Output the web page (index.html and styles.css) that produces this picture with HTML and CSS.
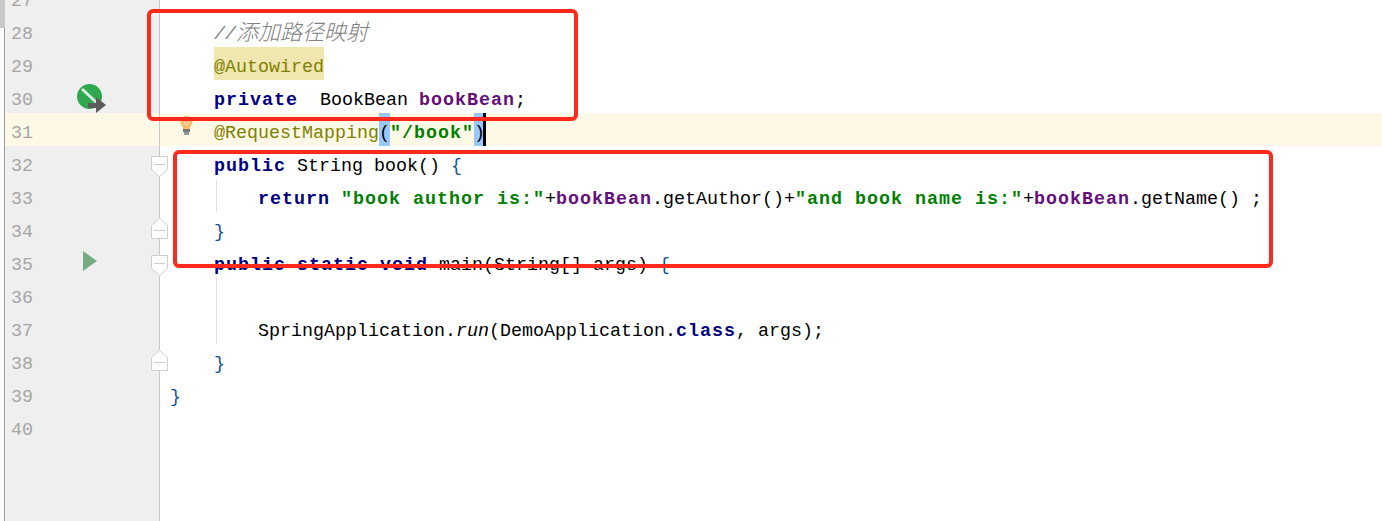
FILE: index.html
```html
<!DOCTYPE html>
<html lang="en">
<head>
<meta charset="utf-8">
<title>DemoApplication.java</title>
<link rel="stylesheet" href="styles.css">
</head>
<body>
<div class="window">
  <div class="strip"><div class="thumb"></div></div>
  <div class="editor">
    <div class="row"><div class="gutter"><span class="num">27</span></div><pre class="code"> </pre></div>
    <div class="row"><div class="gutter"><span class="num">28</span></div><pre class="code">    <span class="cm">//<span class="cjk">添加路径映射</span></span></pre></div>
    <div class="row"><div class="gutter"><span class="num">29</span></div><pre class="code">    <span class="an hl">@Autowired</span></pre></div>
    <div class="row"><div class="gutter"><span class="num">30</span>
      <svg class="bean" width="31" height="31" viewBox="0 0 31 31"><circle cx="12.500" cy="13.500" r="12.500" fill="#2fa84f"/><path d="M5 6 L20 20" stroke="#d8efdc" stroke-width="3" fill="none"/><path d="M11 20h8v-6l10 8-10 8v-5h-8z" fill="#5c5c5c"/></svg>
    </div><pre class="code">    <span class="kw">private</span>  BookBean <span class="fd">bookBean</span>;</pre></div>
    <div class="row current"><div class="gutter"><span class="num">31</span></div><pre class="code">    <span class="an">@RequestMapping</span><span class="match">(</span><span class="st">"/book"</span><span class="match caret">)</span></pre>
      <svg class="bulb" width="13" height="19" viewBox="0 0 13 19"><circle cx="6.500" cy="6" r="6" fill="#f9bd6f"/><rect x="3" y="9" width="7" height="4" fill="#f9bd6f"/><path d="M4 6l2.500 3L9 6" stroke="#fde6c4" fill="none"/><rect x="3" y="13" width="7" height="3" fill="#777"/><rect x="4" y="16" width="5" height="3" fill="#999"/></svg>
    </div>
    <div class="row"><div class="gutter"><span class="num">32</span>
      <svg class="fold fold-down" width="17" height="21" viewBox="0 0 17 21"><path d="M.5.500h16v13l-8 7-8-7z" fill="#fff" stroke="#cfcfcf"/><path d="M3 8.500h11" stroke="#cfcfcf"/></svg>
    </div><pre class="code">    <span class="kw">public</span> String book() <span class="br">{</span></pre></div>
    <div class="row guided"><div class="gutter"><span class="num">33</span></div><pre class="code">        <span class="kw">return</span> <span class="st">"book author is:"</span>+<span class="fd">bookBean</span>.getAuthor()+<span class="st">"and book name is:"</span>+<span class="fd">bookBean</span>.getName() ;</pre></div>
    <div class="row"><div class="gutter"><span class="num">34</span>
      <svg class="fold fold-up" width="17" height="21" viewBox="0 0 17 21"><path d="M8.500.500l8 7v13H.5v-13z" fill="#fff" stroke="#cfcfcf"/><path d="M3 12.500h11" stroke="#cfcfcf"/></svg>
    </div><pre class="code">    <span class="br">}</span></pre></div>
    <div class="row"><div class="gutter"><span class="num">35</span><span class="run"></span>
      <svg class="fold fold-down" width="17" height="21" viewBox="0 0 17 21"><path d="M.5.500h16v13l-8 7-8-7z" fill="#fff" stroke="#cfcfcf"/><path d="M3 8.500h11" stroke="#cfcfcf"/></svg>
    </div><pre class="code">    <span class="kw">public</span> <span class="kw">static</span> <span class="kw">void</span> main(String[] args) <span class="br">{</span></pre></div>
    <div class="row guided"><div class="gutter"><span class="num">36</span></div><pre class="code"> </pre></div>
    <div class="row guided"><div class="gutter"><span class="num">37</span></div><pre class="code">        SpringApplication.<i>run</i>(DemoApplication.<span class="kw">class</span>, args);</pre></div>
    <div class="row"><div class="gutter"><span class="num">38</span>
      <svg class="fold fold-up" width="17" height="21" viewBox="0 0 17 21"><path d="M8.500.500l8 7v13H.5v-13z" fill="#fff" stroke="#cfcfcf"/><path d="M3 12.500h11" stroke="#cfcfcf"/></svg>
    </div><pre class="code">    <span class="br">}</span></pre></div>
    <div class="row"><div class="gutter"><span class="num">39</span></div><pre class="code"><span class="br">}</span></pre></div>
    <div class="row"><div class="gutter"><span class="num">40</span></div><pre class="code"> </pre></div>
    <div class="row"><div class="gutter"></div><pre class="code"> </pre></div>
    <div class="row"><div class="gutter"></div><pre class="code"> </pre></div>
    <div class="row"><div class="gutter"></div><pre class="code"> </pre></div>
  </div>
  <div class="mark mark-a"></div>
  <div class="mark mark-b"></div>
</div>
</body>
</html>
```
FILE: styles.css
```css
html, body { margin: 0; padding: 0; background: #fff; }
.window {
  position: relative;
  display: flex;
  width: 1382px;
  height: 521px;
  overflow: hidden;
  font-family: "Liberation Mono", monospace;
  font-size: 18.33px;
  color: #000;
}
.strip {
  flex: 0 0 4px;
  min-width: 0;
  background: #fcfcfc;
  border-right: 1px solid #9a9a9a;
}
.thumb { width: 5px; height: 28px; background: #c9c9c9; }
.editor { flex: 1; min-width: 0; margin-top: -19px; }
.row {
  position: relative;
  display: flex;
  height: 33px;
}
.row.current { background: #fef9e6; }
.guided::before {
  content: "";
  position: absolute;
  left: 211px;
  top: 0;
  width: 1px;
  height: 33px;
  background: #e0e0e0;
}
.gutter {
  position: relative;
  flex: 0 0 154px;
  background: #efefef;
  border-right: 1px solid #c8c8c8;
  line-height: 33px;
}
.current .gutter { background: #fef9e6; }
.num { display: block; padding: 4px 0 0 6px; color: #a6a6a6; }
.code {
  margin: 0;
  padding: 4px 0 0 10px;
  font: inherit;
  line-height: 33px;
  white-space: pre;
}
.kw { color: #000080; font-weight: bold; letter-spacing: 1px; }
.st { color: #008000; font-weight: bold; letter-spacing: 1px; }
.fd { color: #660e7a; font-weight: bold; letter-spacing: 1px; }
.an { color: #808000; }
.cm { color: #808080; font-style: italic; }
.br { color: #17508f; }
.cjk {
  font-family: "Noto Sans CJK SC", sans-serif;
  font-size: 22px;
  font-weight: 300;
  line-height: 0;
  vertical-align: -1px;
}
.hl, .match { padding: 10.150px 0 2.150px; }
.hl { background: #f0e6b0; }
.match { background: #99c8ff; }
.caret { position: relative; }
.caret::after {
  content: "";
  position: absolute;
  top: 0;
  right: -1px;
  width: 3px;
  height: 33px;
  background: #000;
}
.bean { position: absolute; left: 72px; top: 3px; }
.bulb { position: absolute; left: 175px; top: 3px; }
.run {
  position: absolute;
  left: 78px;
  top: 6px;
  border-left: 14px solid #76ad80;
  border-top: 10px solid transparent;
  border-bottom: 10px solid transparent;
}
.fold { position: absolute; left: 146px; }
.fold-down { top: 10px; }
.fold-up { top: 6px; }
.mark {
  position: absolute;
  box-sizing: border-box;
  border: 4px solid #ff2a1c;
  border-radius: 6px;
  pointer-events: none;
}
.mark-a { left: 147px; top: 9px; width: 431px; height: 112px; }
.mark-b { left: 173px; top: 150px; width: 1100px; height: 118px; }
```
